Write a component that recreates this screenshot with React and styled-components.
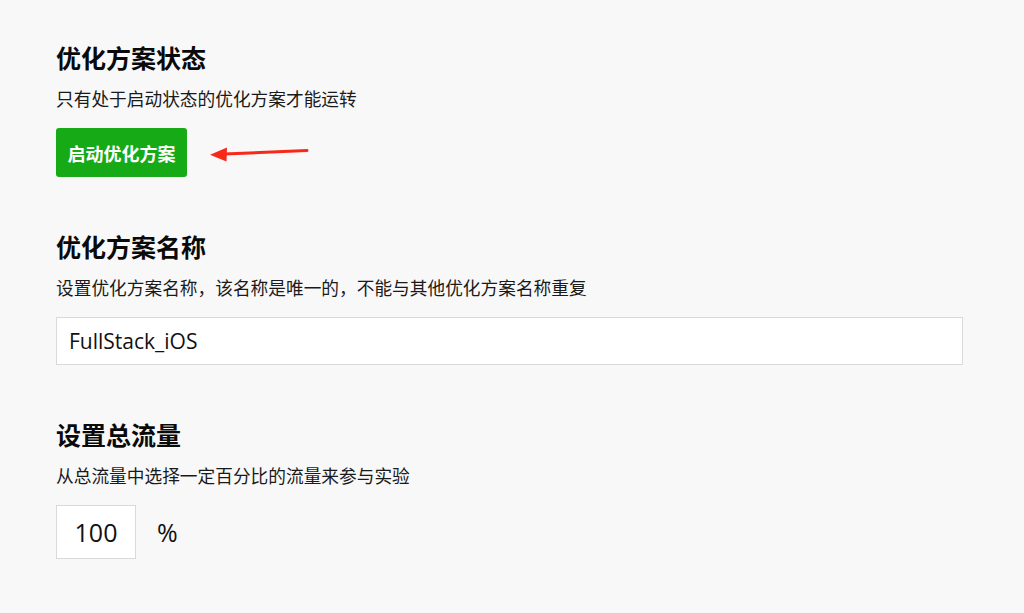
import React from 'react';
import styled, { createGlobalStyle } from 'styled-components';

//* * Styleguides * *//

const GlobalStyle = createGlobalStyle`
  html, body {
    margin: 0;
    padding: 0;
    background: #f8f8f8;
  }
  body {
    font-family: "Noto Sans CJK SC", "Noto Sans", sans-serif;
    color: #111;
  }
`;

const Page = styled.div`
  padding: 42px 61px 0 56px;
  display: flex;
  flex-direction: column;
  gap: 54px;
`;

const Section = styled.section`
  display: flex;
  flex-direction: column;
`;

const Title = styled.h2`
  margin: 0;
  font-size: 25px;
  line-height: 30px;
  font-weight: 700;
  color: #0a0a0a;
`;

const Desc = styled.p`
  margin: 14px 0 0;
  font-size: 17.7px;
  line-height: 24px;
  color: #1a1a1a;
`;

const ControlRow = styled.div`
  margin-top: 18px;
  display: flex;
  align-items: center;
  gap: ${(p) => p.gap || 0}px;
`;

const StartButton = styled.button`
  width: 131px;
  height: 49px;
  border: none;
  border-radius: 3px;
  background: #17aa17;
  color: #fff;
  font-family: "Noto Sans CJK SC", sans-serif;
  font-size: 18px;
  font-weight: 700;
  padding: 0;
  cursor: pointer;
`;

const TextInput = styled.input`
  box-sizing: border-box;
  width: ${(p) => p.w}px;
  height: ${(p) => p.h}px;
  border: 1px solid #d9d9d9;
  background: #fff;
  padding: 0 ${(p) => (p.center ? 0 : 12)}px;
  text-align: ${(p) => (p.center ? 'center' : 'left')};
  font-family: "Open Sans", "Noto Sans", sans-serif;
  font-size: ${(p) => p.fs}px;
  color: #111;
  outline: none;
`;

const Unit = styled.span`
  font-family: "Open Sans", "Noto Sans", sans-serif;
  font-size: 25px;
  color: #111;
`;

//* * Func/Render * *//

const Arrow = () => (
  <svg width="100" height="20" viewBox="0 0 100 20">
    <line x1="15" y1="11" x2="98" y2="7.5" stroke="#f9291a" strokeWidth="3" strokeLinecap="round" />
    <polygon points="1,11.8 18,4.5 17.5,18.5" fill="#f9291a" />
  </svg>
);

const App = () => (
  <>
    <GlobalStyle />
    <Page>
      <Section>
        <Title>优化方案状态</Title>
        <Desc>只有处于启动状态的优化方案才能运转</Desc>
        <ControlRow gap={22}>
          <StartButton>启动优化方案</StartButton>
          <Arrow />
        </ControlRow>
      </Section>
      <Section>
        <Title>优化方案名称</Title>
        <Desc>设置优化方案名称，该名称是唯一的，不能与其他优化方案名称重复</Desc>
        <ControlRow>
          <TextInput w={907} h={48} fs={21} defaultValue="FullStack_iOS" />
        </ControlRow>
      </Section>
      <Section>
        <Title>设置总流量</Title>
        <Desc>从总流量中选择一定百分比的流量来参与实验</Desc>
        <ControlRow gap={21}>
          <TextInput w={80} h={54} fs={25} center defaultValue="100" />
          <Unit>%</Unit>
        </ControlRow>
      </Section>
    </Page>
  </>
);

export default App;
